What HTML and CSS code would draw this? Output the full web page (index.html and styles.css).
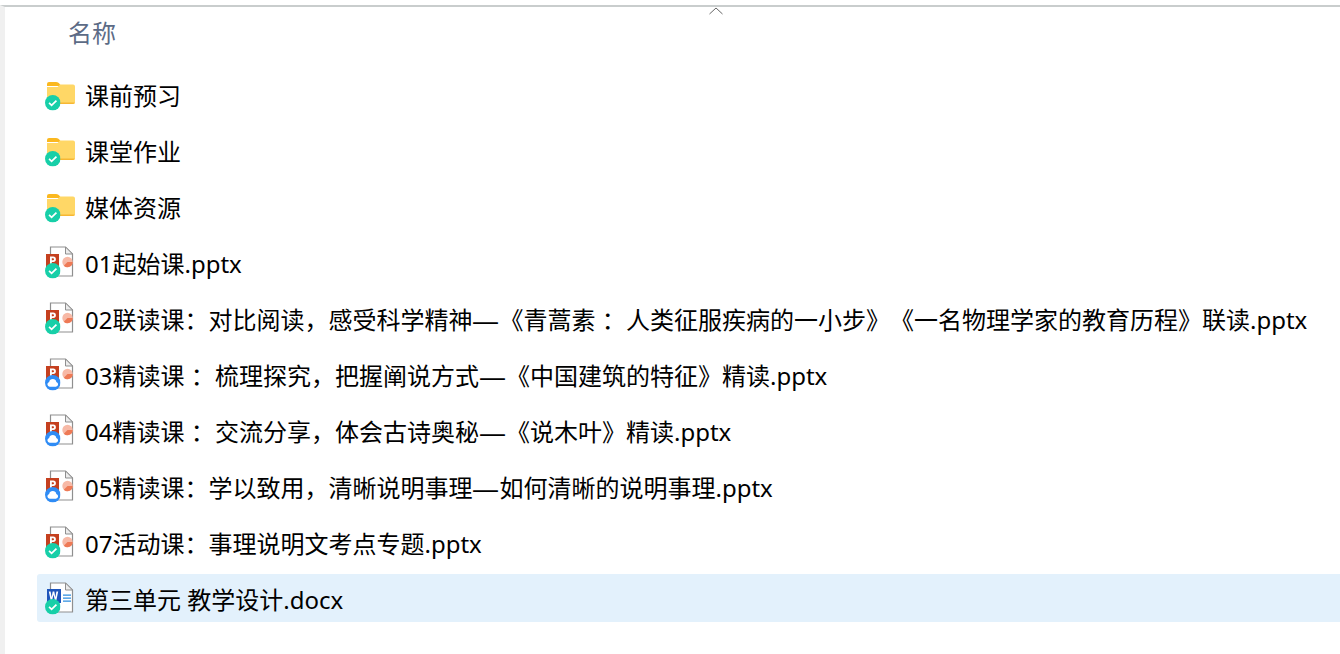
FILE: index.html
```html
<!DOCTYPE html>
<html lang="zh-CN">
<head>
    <meta charset="UTF-8">
    <title>名称</title>
    <link rel="stylesheet" href="styles.css">
</head>
<body>
    <svg class="defs" width="0" height="0">
        <symbol id="folder" viewBox="0 0 28 22">
            <path d="M0 2a2 2 0 0 1 2-2h7c2 0 3 1 4 2.500L14 4H0z" fill="#fbb81f"/>
            <path d="M0 5h10.500L13 2.500h13a2 2 0 0 1 2 2V20a2 2 0 0 1-2 2H2a2 2 0 0 1-2-2z" fill="#ffd766"/>
            <path d="M0 20.500h28V20a2 2 0 0 1-2 2H2a2 2 0 0 1-2-2z" fill="#f7b733"/>
        </symbol>
        <symbol id="page" viewBox="0 0 28 32">
            <path d="M4.500 1h15l7 7v22h-22z" fill="#fff" stroke="#8f8f8f" stroke-width="1.200"/>
            <path d="M19.500 1v7h7z" fill="#ececec" stroke="#8f8f8f" stroke-width="1"/>
        </symbol>
        <symbol id="ppt" viewBox="0 0 28 32">
            <use href="#page" width="28" height="32"/>
            <circle cx="21.500" cy="16" r="5.200" fill="#f7b9a6"/>
            <path d="M21.500 16h5.200a5.200 5.200 0 0 1-8.900 3.700z" fill="#ee7a56"/>
            <rect x="0" y="8" width="13" height="14" fill="#c5401f"/>
            <path d="M4 19v-8.500h3.200a2.700 2.700 0 0 1 0 5.400H5.800V19zM5.800 12.200v2H7a1 1 0 0 0 0-2z" fill="#fff"/>
        </symbol>
        <symbol id="word" viewBox="0 0 28 32">
            <use href="#page" width="28" height="32"/>
            <path d="M17 12.500h8v1.300h-8zM17 15.500h8v1.300h-8zM17 18.500h8v1.300h-8z" fill="#2d8ee0"/>
            <rect x="1" y="7" width="14" height="14" fill="#1f55bb"/>
            <path d="M2.800 9.500h1.800l1 5.800 1.100-5.800h1.600l1.100 5.800 1-5.800h1.800L10.400 18H8.800L7.500 12.500 6.200 18H4.600z" fill="#fff"/>
        </symbol>
        <symbol id="synced" viewBox="0 0 16 16">
            <circle cx="8" cy="8" r="8" fill="#17cfa8"/>
            <path d="M4.200 8.200l2.600 2.500 5-5" fill="none" stroke="#fff" stroke-width="1.800"/>
        </symbol>
        <symbol id="cloud" viewBox="0 0 16 16">
            <circle cx="8" cy="8" r="8" fill="#2f8cf5"/>
            <path d="M4.800 12a2.500 2.500 0 0 1-.5-4.900 3.800 3.800 0 0 1 7.400 0 2.500 2.500 0 0 1-.5 4.900z" fill="#fff"/>
        </symbol>
    </svg>

    <div class="window">
        <div class="sort-arrow">
            <svg width="16" height="8" viewBox="0 0 16 8"><path d="M1.500 7L8 1l6.500 6" fill="none" stroke="#666" stroke-width="1"/></svg>
        </div>
        <div class="header">名称</div>

        <ul class="files">
            <li class="row">
                <span class="icon icon-folder"><svg class="type"><use href="#folder"/></svg><svg class="badge"><use href="#synced"/></svg></span>
                <span class="name">课前预习</span>
            </li>
            <li class="row">
                <span class="icon icon-folder"><svg class="type"><use href="#folder"/></svg><svg class="badge"><use href="#synced"/></svg></span>
                <span class="name">课堂作业</span>
            </li>
            <li class="row">
                <span class="icon icon-folder"><svg class="type"><use href="#folder"/></svg><svg class="badge"><use href="#synced"/></svg></span>
                <span class="name">媒体资源</span>
            </li>
            <li class="row">
                <span class="icon"><svg class="type"><use href="#ppt"/></svg><svg class="badge"><use href="#synced"/></svg></span>
                <span class="name">01起始课.pptx</span>
            </li>
            <li class="row">
                <span class="icon"><svg class="type"><use href="#ppt"/></svg><svg class="badge"><use href="#synced"/></svg></span>
                <span class="name">02联读课：对比阅读，感受科学精神<span class="dash">—</span>《青蒿素 <span class="colon">： </span>人类征服疾病的一小步》《一名物理学家的教育历程》联读.pptx</span>
            </li>
            <li class="row">
                <span class="icon"><svg class="type"><use href="#ppt"/></svg><svg class="badge"><use href="#cloud"/></svg></span>
                <span class="name">03精读课 <span class="colon">： </span>梳理探究，把握阐说方式<span class="dash">—</span>《中国建筑的特征》精读.pptx</span>
            </li>
            <li class="row">
                <span class="icon"><svg class="type"><use href="#ppt"/></svg><svg class="badge"><use href="#cloud"/></svg></span>
                <span class="name">04精读课 <span class="colon">： </span>交流分享，体会古诗奥秘<span class="dash">—</span>《说木叶》精读.pptx</span>
            </li>
            <li class="row">
                <span class="icon"><svg class="type"><use href="#ppt"/></svg><svg class="badge"><use href="#cloud"/></svg></span>
                <span class="name">05精读课：学以致用，清晰说明事理<span class="dash">—</span>如何清晰的说明事理.pptx</span>
            </li>
            <li class="row">
                <span class="icon"><svg class="type"><use href="#ppt"/></svg><svg class="badge"><use href="#synced"/></svg></span>
                <span class="name">07活动课：事理说明文考点专题.pptx</span>
            </li>
            <li class="row selected">
                <span class="icon"><svg class="type"><use href="#word"/></svg><svg class="badge"><use href="#synced"/></svg></span>
                <span class="name">第三单元 教学设计.docx</span>
            </li>
        </ul>
    </div>
</body>
</html>
```

FILE: styles.css
```css
html, body {
    margin: 0;
    height: 100%;
    overflow: hidden;
    background: #fff;
}
body {
    font-family: "Noto Sans", "Noto Sans CJK SC", sans-serif;
    color: #000;
    text-spacing-trim: space-all;
}
.defs {
    position: absolute;
}
.window {
    position: relative;
    box-sizing: border-box;
    height: 654px;
    margin-top: 5px;
    border-top: 2px solid #c9cdcd;
    border-left: 5px solid #f0f0f0;
}
.sort-arrow {
    position: absolute;
    top: 0;
    left: 703px;
    line-height: 0;
}
.header {
    height: 52px;
    padding-left: 63px;
    font-size: 24px;
    line-height: 52px;
    color: #5c6b86;
}
.files {
    list-style: none;
    margin: 0;
    padding: 11px 0 0 32px;
    display: flex;
    flex-direction: column;
    gap: 8px;
}
.row {
    display: flex;
    align-items: center;
    height: 48px;
    padding-left: 8px;
    border-radius: 3px 0 0 3px;
}
.selected {
    background: #e3f1fc;
}
.icon {
    position: relative;
    width: 30px;
    height: 32px;
    flex: none;
    margin-right: 10px;
}
.type {
    position: absolute;
    left: 1px;
    top: 0;
    width: 28px;
    height: 32px;
}
.icon-folder .type {
    left: 2px;
    top: 4px;
    height: 22px;
}
.badge {
    position: absolute;
    left: 0;
    top: 17px;
    width: 15.500px;
    height: 15.500px;
}
.name {
    font-size: 24px;
    line-height: 32px;
    white-space: nowrap;
    position: relative;
    top: 2px;
}
/* the dash runs wider and the spaced colon narrower in the original font */
.dash {
    display: inline-block;
    width: 27px;
    transform: scaleX(1.125);
    transform-origin: left center;
}
.colon {
    word-spacing: -6px;
}
```
